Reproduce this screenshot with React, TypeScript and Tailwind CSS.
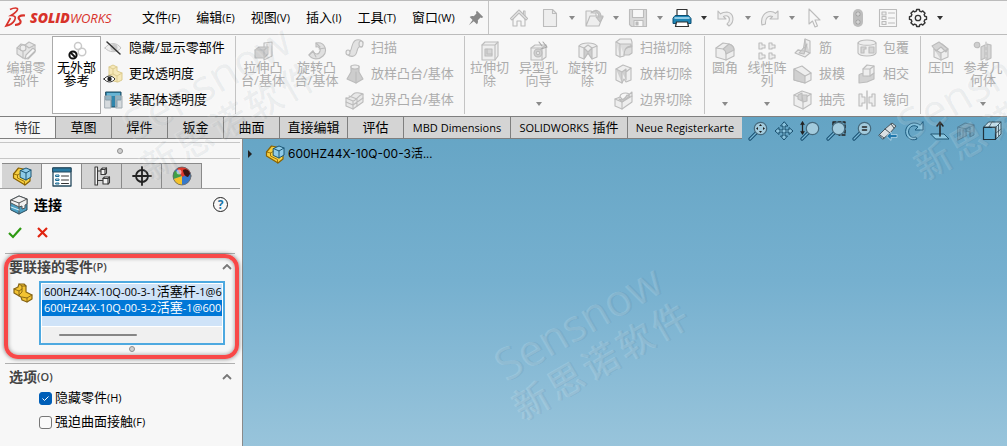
import type { ReactNode } from "react";

type IconProps = { size?: number; children: ReactNode };

function Icon({ size = 20, children }: IconProps) {
  return (
    <svg
      width={size}
      height={size}
      viewBox="0 0 20 20"
      fill="none"
      strokeLinejoin="round"
      strokeLinecap="round"
      className="shrink-0"
      aria-hidden="true"
    >
      {children}
    </svg>
  );
}

// Disabled commands share one grey outline style
function Grey({ children }: { children: ReactNode }) {
  return (
    <Icon>
      <g stroke="#bcbcbc" strokeWidth="1.1" fill="#eeeeee">
        {children}
      </g>
    </Icon>
  );
}

const toolIcons = {
  home: (
    <Grey>
      <path d="M1.500 10.500 10 2l8.500 8.500-1.500 1.500-7-7-7 7z" />
      <path d="M4 11v7h4v-5h4v5h4v-7M14.500 6V3h1.500v4.500" fill="none" />
    </Grey>
  ),
  blank: (
    <Grey>
      <path d="M3.500 1.500h9l4 4v13h-13z" />
      <path d="M12.500 1.500v4h4" fill="none" />
    </Grey>
  ),
  open: (
    <Grey>
      <path d="M2 18V3h5l2 2h3v3M2 18 6 8h13l-4 10z" />
      <path d="M7 5c5-3 8 0 8 4h-3l4 5 3-5h-2c0-6-5-9-10-4z" fill="#c9c9c9" />
    </Grey>
  ),
  save: (
    <Grey>
      <path d="M1.500 1.500h17v17h-15l-2-2z" fill="#d9d9d9" />
      <path d="M4.500 1.500h11v8h-11zM6 12.500h9v6H6z" fill="#f7f7f7" />
      <path d="M8 14h2v3H8z" fill="#b9b9b9" />
    </Grey>
  ),
  print: (
    <Icon>
      <path d="M5 8V1.500h10V8" fill="#fff" stroke="#333" strokeWidth="1.200" />
      <path d="M3.500 7.500h13l2.500 3v5H1v-5z" fill="#1f86b5" stroke="#0c4f74" />
      <path d="M3 10h14" stroke="#b9e2f4" strokeWidth="1.500" />
      <path d="M4.500 14h11l1 4.500h-13z" fill="#fff" stroke="#333" strokeWidth="1.200" />
    </Icon>
  ),
  undo: (
    <Grey>
      <path d="M2 3v8h8L7.500 8.500c4-2 7 1 5.500 5L11 16l2 2c6-4 5-13-2-14-3 0-5 .6-6.500 1.800z" />
    </Grey>
  ),
  redo: (
    <Grey>
      <path d="M18 3v8h-8l2.500-2.500C8.500 7 5 10 5.500 16l-3.500 1C0 9 5 3.500 10.500 3.500c2 0 3.800.6 5 1.800z" />
    </Grey>
  ),
  pointer: (
    <Grey>
      <path d="M5 1v15l3.500-3 2.500 6 2.500-1-2.500-6h5z" fill="#f7f7f7" />
    </Grey>
  ),
  light: (
    <Icon>
      <rect x="5" y="1" width="10" height="18" rx="5" fill="#bdbdbd" />
      <circle cx="10" cy="6" r="2.500" fill="#a3a3a3" />
      <circle cx="10" cy="14" r="2.500" fill="#a3a3a3" />
      <path d="M10 4.500v3M8.500 6h3M10 12.500v3M8.500 14h3" stroke="#e2e2e2" />
    </Icon>
  ),
  sheet: (
    <Grey>
      <path d="M1.500 1.500h17v17h-17z" fill="#f7f7f7" />
      <path d="M4 4h4v3H4zM4 8.500h4v3H4zM4 13.500h4v3H4zM10.500 5h6M10.500 10h6M10.500 15h6" />
    </Grey>
  ),
  gear: (
    <Icon>
      <path
        d="M8.300 3.200 8.600 1.500h2.800l.3 1.700 1.700.7 1.400-1 2.300 2.300-1 1.400.7 1.700 1.700.3v2.800l-1.700.3-.7 1.700 1 1.400-2.300 2.300-1.400-1-1.700.7-.3 1.700H8.600l-.3-1.700-1.700-.7-1.400 1-2.300-2.300 1-1.400-.7-1.700-1.700-.3V8.600l1.700-.3.7-1.700-1-1.400 2.300-2.300 1.400 1z"
        stroke="#333"
        strokeWidth="1.400"
      />
      <circle cx="10" cy="10" r="2.700" stroke="#333" strokeWidth="1.300" />
    </Icon>
  ),
  pin: (
    <Icon size={18}>
      <path d="M11 2l7 7-1.500 1-1.500-.500-3 3c.5 2 0 3.500-1 4.500L7.500 13.500 2 18l4.200-5.800L3 9c1-1 2.600-1.400 4.500-1l3-3-.500-1.500z" fill="#888" />
    </Icon>
  ),
};

const ribbonIcons = {
  editPart: (
    <Grey>
      <path d="M1 7l4-4 4 1 4-3 6 3v7l-7 7-5-1-6-4z" fill="#e6e6e6" />
      <path d="M1 7l6 3v7M9 4l4 3 6-3" fill="none" />
      <circle cx="7" cy="7" r="3" />
      <path d="M9 18l1-4 7-7 2.500 2.500-7 7z" fill="#f7f7f7" />
    </Grey>
  ),
  noExternal: (
    <Icon>
      <g stroke="#c9c9c9" strokeWidth="1.500">
        <circle cx="11" cy="5" r="3.500" />
        <circle cx="15" cy="11" r="3.800" />
      </g>
      <circle cx="6" cy="14" r="3.600" fill="#fff" stroke="#111" strokeWidth="2" />
      <path d="M4 12l4 4" stroke="#111" strokeWidth="1.800" />
    </Icon>
  ),
  hideShow: (
    <Icon>
      <path d="M2 10c4-6 12-6 16 0-4 5-12 5-16 0z" fill="#eee" stroke="#c4c4c4" />
      <circle cx="11" cy="9.500" r="3.500" fill="#c9c9c9" />
      <path d="M4 4l13 12" stroke="#333" strokeWidth="1.500" />
    </Icon>
  ),
  transparency: (
    <Icon>
      <path d="M6 9V3l4-2 4 2v4l5 2v7l-4 2-9-2z" fill="#f6e8b8" stroke="#dccb8f" />
      <path d="M6 3l4 2 4-2M10 5v5l4 2 5-3M14 12v6M10 10l-4 1" stroke="#dccb8f" />
      <path d="M1 15c3-4 8-4 11 0-3 4-8 4-11 0z" fill="#fff" stroke="#333" />
      <circle cx="6.500" cy="15" r="2.200" fill="#222" />
    </Icon>
  ),
  assembly: (
    <Icon>
      <path d="M3 2h15v8h-4v7H8v-7H3z" fill="#2f86ad" stroke="#1d4a61" />
      <path d="M4 3h13v3H4z" fill="#67b4d4" />
      <path d="M2 6h6v12H2zM13 6h6v12h-6z" fill="#c3cbd0" stroke="#a3adb3" fillOpacity=".65" />
    </Icon>
  ),
  extrude: (
    <Grey>
      <path d="M11 2l8-1v14l-8 4z" />
      <path d="M2 9l4-3h9v7l-4 4H2z" fill="#d0d0d0" />
      <path d="M2 9h9v8M11 9l4-3M14 3v4" fill="none" />
    </Grey>
  ),
  revolve: (
    <Grey>
      <path d="M9 2c9-2 12 8 7 13-4 4-11 4-14-1l4-4c2 4 6 4 7 0 1-3-2-5-4-4z" fill="#e0e0e0" />
      <path d="M2 14l4-4 3 6M9 2l4 4M12 8l6-1" fill="none" />
    </Grey>
  ),
  sweep: (
    <Grey>
      <path d="M2 13c3 2 4 0 5-5 1-5 4-7 8-6l3 2-1 5c-3-1-4 0-5 4-1 6-6 7-10 3z" fill="#e2e2e2" />
      <ellipse cx="16" cy="6" rx="2" ry="3" />
      <ellipse cx="3" cy="14.500" rx="2" ry="2.500" />
    </Grey>
  ),
  loft: (
    <Grey>
      <path d="M6 2h8v6l4 7-7 4-9-4 4-7z" fill="#cdcdcd" />
      <ellipse cx="10" cy="3" rx="4" ry="2" />
      <path d="M11 8v11" fill="none" />
    </Grey>
  ),
  boundary: (
    <Grey>
      <path d="M1 8c4 1 5-3 9-5 3-1 5 0 8 1v8L8 19l-7-3z" fill="#e8e8e8" />
      <path d="M1 8l7 3c4-1 5-6 10-7M8 11v8M4 6l8 3v7M1 12l7 3 10-7" fill="none" />
    </Grey>
  ),
  cutExtrude: (
    <Grey>
      <path d="M2 4l3-3h13v14l-3 4H2z" />
      <path d="M2 4h13v15M15 4l3-3" fill="none" />
      <path d="M5 8h7v7H5z" fill="#d6d6d6" />
      <path d="M7 8v5h5" fill="none" />
    </Grey>
  ),
  holeWizard: (
    <Grey>
      <path d="M2 7l4-3h11v12l-4 3H2z" />
      <path d="M2 7h11v12M13 7l4-3" fill="none" />
      <circle cx="9" cy="12" r="4" fill="#d0d0d0" />
      <circle cx="9" cy="12" r="1.600" />
      <path d="M10 1l3 4M14 1l4 5-6 2" fill="none" stroke="#a6a6a6" />
    </Grey>
  ),
  cutRevolve: (
    <Grey>
      <path d="M1 5c3-4 15-4 18 0v11l-5 2-4-6-4 6-5-2z" />
      <path d="M6 7l4 4 4-4v11l-4-6-4 6z" fill="#cdcdcd" />
      <path d="M1 5l5 2 4-3 4 3 5-2" fill="none" />
    </Grey>
  ),
  cutSweep: (
    <Grey>
      <path d="M2 4l4-3h11l1 3v4c-5 0-8 3-8 10l-4 1-4-2z" />
      <path d="M2 4l4 2v13M6 6h11v3c-5 0-7 3-7 8M11 12c1-3 4-4 7-4v7l-3 2h-4" fill="#dcdcdc" />
    </Grey>
  ),
  cutLoft: (
    <Grey>
      <path d="M2 5l7-4 8 3v12l-5 2-2-3-2 4-6-3z" />
      <path d="M2 5l6 3v11M8 8l4-3v11M12 8l5-4" fill="#d0d0d0" />
    </Grey>
  ),
  cutBoundary: (
    <Grey>
      <path d="M1 9l5-2 3 3 9-8v10L8 19l-7-3z" />
      <path d="M1 9l7 3 10-6M8 12v7M6 7c0-4 6-5 9-3" fill="none" />
      <path d="M5 9c3 2 6 0 8-4l3 1-8 6z" fill="#cfcfcf" />
    </Grey>
  ),
  fillet: (
    <Grey>
      <path d="M1 7l7-5 6 1c3 1 5 3 5 6v6l-8 4-10-3z" />
      <path d="M1 7l7 1c2 1 3 3 3 5l8-4c0-3-2-5-5-6L8 8" fill="#cfcfcf" />
      <path d="M11 13v6" fill="none" />
    </Grey>
  ),
  linear: (
    <Grey>
      <path d="M2 2h3v2h3v3H5v1H2zM12 2h3v2h3v3h-3v1h-3zM2 12h3v2h3v3H5v1H2zM12 12h3v2h3v3h-3v1h-3z" />
    </Grey>
  ),
  rib: (
    <Grey>
      <path d="M12 1l5 2v12l-5 4-10-4 3-3 5 1z" />
      <path d="M12 1v12l5 2M12 13l-7-1M14 6L6 15l5 1z" fill="#d5d5d5" />
    </Grey>
  ),
  draft: (
    <Grey>
      <path d="M1 5l8-3 9 7v7l-6 3-11-3z" />
      <path d="M1 5l11 7v7l-11-3z" fill="#d0d0d0" />
      <path d="M12 12l6-3" fill="none" />
    </Grey>
  ),
  shell: (
    <Grey>
      <path d="M1 5l8-4 9 3v10l-8 5-9-4z" />
      <path d="M1 5l9 4v10M10 9l8-5" fill="none" />
      <path d="M5 5l4-2v8l-4-2zM9 5l5 0v6l-4 1z" fill="#d0d0d0" />
    </Grey>
  ),
  wrap: (
    <Grey>
      <path d="M1 5c2-4 16-4 18 0v10c-2 4-16 4-18 0z" />
      <path d="M1 5c2 3 16 3 18 0" fill="none" />
      <path d="M4 9h5v2H7v4H4zM12 9h5v6h-5z" fill="#d6d6d6" />
    </Grey>
  ),
  intersect: (
    <Grey>
      <path d="M2 11c2-2 4-2 6 0 3 2 5 0 9-2v6l-7 3-8 1z" fill="#d2d2d2" />
      <path d="M6 5l4-4 7 1v7l-4 3H6z" />
      <path d="M6 5h7v7M13 5l4-3" fill="none" />
    </Grey>
  ),
  mirror: (
    <Grey>
      <path d="M2 4h3v3h3v6H5v3H2zM18 4h-3v3h-3v6h3v3h3z" />
      <path d="M10 1v18" strokeWidth="1.400" />
    </Grey>
  ),
  indent: (
    <Grey>
      <path d="M3 8l8-5 6 5v8l-7 3-7-3z" />
      <path d="M1 5l7-4 9 7-2 3-5-5-5 4zM3 8l7 4v7M10 12l7-4" fill="#d5d5d5" />
    </Grey>
  ),
  geometry: (
    <Grey>
      <circle cx="4" cy="4" r="2.800" fill="#cfcfcf" />
      <path d="M8 6l4-2v13l-4 2zM14 3l4 1v13l-4 2z" fill="#d6d6d6" />
      <path d="M13 1v18" strokeDasharray="3 2" fill="none" />
    </Grey>
  ),
};

function Part() {
  return (
    <Icon>
      <path d="M1.500 8l5-6 5 1v4l6.500 3v5l-5 4L1.500 12z" fill="#f7cf3f" stroke="#8a6200" strokeWidth="1.200" />
      <path d="M1.500 8l4 1 3.500-2M5.500 9v3l7 3.500V19" stroke="#8a6200" strokeWidth=".8" />
      <path d="M8.500 4.500L14 2l5 2v7l-5 3-5.500-2.500z" fill="#8fcbe8" stroke="#1b5675" />
      <path d="M8.500 4.500L14 7l5-3M14 7v7" stroke="#1b5675" />
    </Icon>
  );
}

const panelIcons = {
  properties: (
    <Icon>
      <path d="M1 1h18v18H1z" fill="#fff" stroke="#25495d" strokeWidth="1.300" />
      <path d="M1 1h18v4H1z" fill="#2a7ba3" stroke="#25495d" />
      <path d="M4 8h3v1.500H4zM4 12h3v1.500H4zM4 16h3v1H4z" stroke="#1b6d96" />
      <path d="M9.500 9h7M9.500 13h7M9.500 16.500h7" stroke="#333" />
    </Icon>
  ),
  config: (
    <Icon>
      <g stroke="#3a3a3a" strokeWidth="1.100">
        <path d="M3 1v18h2.500V1zM5.500 5H9M5.500 14.500H11" fill="#fff" />
        <path d="M9 3.500l1.500-1.500h4v5L13 8.500H9z" fill="#f2f2f2" />
        <path d="M9 3.500h4v5M13 3.500L14.500 2" />
        <path d="M11 12.500l1.500-1.500h5v5.500L16 18h-5z" fill="#f2f2f2" />
        <path d="M11 12.500h5V18M16 12.500l1.500-1.500" />
      </g>
    </Icon>
  ),
  dimension: (
    <Icon>
      <circle cx="10" cy="10" r="6" stroke="#222" strokeWidth="1.800" />
      <path d="M10 1v18M1 10h18" stroke="#222" strokeWidth="1.800" />
    </Icon>
  ),
  display: (
    <Icon>
      <circle cx="10" cy="10" r="9" fill="#3678c9" />
      <path d="M10 10L1.500 13A9 9 0 0 1 3 4.500z" fill="#3f9f46" />
      <path d="M10 11L5 2.500A9 9 0 0 1 18.500 7z" fill="#e0392b" />
      <path d="M10 10l-8.500 3a9 9 0 0 0 8.500 6z" fill="#f4c22b" />
      <path d="M11 4c3-2 7 1 7 4l-2 3c-3 0-5-4-5-7z" fill="#3c1512" />
      <circle cx="7" cy="6" r="2.500" fill="#fff" fillOpacity=".55" />
      <circle cx="10" cy="10" r="9" stroke="#666" strokeWidth=".8" />
    </Icon>
  ),
  join: (
    <Icon>
      <path d="M2 5l8-4 8 3v11l-8 4-8-4z" fill="#4d9fc2" stroke="#294b5c" />
      <path d="M2 5l8-4 8 3v5l-2 1v3l-3 1v-3l-3 1-8-4z" fill="#f2f2f2" stroke="#555" />
      <path d="M2 5l8 3 8-4M10 8v11" stroke="#555" />
      <path d="M2 12l8 3" stroke="#d6eef8" />
    </Icon>
  ),
  body: (
    <Icon>
      <path d="M1 6l4-2 1-3h5l2 2v6l6 3v4l-5 3-5-2-1-3-7-4z" fill="#f3c333" stroke="#856313" strokeWidth="1.200" />
      <path d="M1 6l5 2 3-2M6 8v5M6 1l3 2v6l-3 3M9 3h4M9 14l5 1 5-3M14 15v4" stroke="#856313" strokeWidth=".9" />
    </Icon>
  ),
};

function Lens({ children }: { children?: ReactNode }) {
  return (
    <>
      <path d="M2 18l6-6" stroke="#174e70" strokeWidth="3.200" />
      <path d="M2 18l6-6" stroke="#79b8d6" strokeWidth="1.200" />
      <circle cx="12.500" cy="7.500" r="6.200" fill="#a3cbdd" stroke="#45697c" strokeWidth="1.200" />
      {children}
    </>
  );
}

const viewTools = [
  {
    name: "Zoom to Fit",
    icon: (
      <Lens>
        <path d="M12.500 3l1.500 2h-3zM12.500 12l1.500-2h-3zM8 7.500l2-1.500v3zM17 7.500l-2-1.500v3z" fill="#222" />
      </Lens>
    ),
  },
  {
    name: "Pan",
    icon: (
      <path
        d="M10 1L6.500 5H9v4H5V6.500L1 10l4 3.500V11h4v4H6.500L10 19l3.500-4H11v-4h4v2.500l4-3.500-4-3.500V9h-4V5h2.500z"
        fill="#8bc4de"
        stroke="#174c6b"
      />
    ),
  },
  {
    name: "Dynamic Zoom",
    icon: (
      <>
        <Lens />
        <path d="M2.500 1v12M1 3.500L2.500 1 4 3.500M1 10.500L2.500 13 4 10.500" stroke="#222" strokeWidth="1.300" />
      </>
    ),
  },
  {
    name: "Zoom to Area",
    icon: (
      <>
        <path d="M7 1h12v13h-6M7 1v3" stroke="#222" strokeWidth="1.400" strokeDasharray="3 2" />
        <Lens />
      </>
    ),
  },
  {
    name: "Zoom to Selection",
    icon: (
      <Lens>
        <path d="M10.500 6h4M10.500 9h4" stroke="#222" strokeWidth="1.600" />
      </Lens>
    ),
  },
  {
    name: "Previous View",
    icon: (
      <>
        <path d="M1 14L7 8l7-6 4 3-6 7-7 6z" fill="#d9e0e3" stroke="#46545c" />
        <path d="M7 8l5 4M13 3l3 4M2 14l4 3" stroke="#46545c" />
        <path d="M9 15l4-4v2.500h6v3h-6V19z" fill="#2179ae" stroke="#d7edf7" strokeWidth=".6" />
      </>
    ),
  },
  {
    name: "Rotate",
    icon: <path d="M19 1v8h-8l3-3C8 2 3 8 5 13c1 3 4 4 7 3l1 2C6 21 0 15 2 8 4 2 11 0 16 4z" fill="#86c1dc" stroke="#1d5b7e" />,
  },
  {
    name: "Normal To",
    icon: (
      <>
        <path d="M1 13h13l5 5H6z" fill="#8cc8e1" stroke="#205773" />
        <path d="M10 15V2M7 5l3-4 3 4" stroke="#222" strokeWidth="1.500" />
      </>
    ),
  },
  {
    name: "Section View",
    icon: (
      <g fill="#6f9fb8" stroke="#547f96">
        <path d="M2 6l7-4 9 2v10l-4 2v-5l-4-1v5l-8 4z" />
        <path d="M2 6l8 2v7M10 8l8-4M4 8v8M7 9v7M14 6v9" />
      </g>
    ),
  },
  {
    name: "View Orientation",
    icon: (
      <>
        <path d="M7 1h12v12l-5 5V6H2z" fill="#c6e2ee" stroke="#2b4552" />
        <path d="M1.500 6.500h12v12h-12z" fill="#5fabd0" stroke="#20333d" strokeWidth="1.200" />
        <path d="M14 6l5-5M14 12l5-4M10 1l-3 5M16.500 4v11" stroke="#2b4552" strokeWidth=".8" />
      </>
    ),
  },
];

const menus = [
  ["文件", "(F)"],
  ["编辑", "(E)"],
  ["视图", "(V)"],
  ["插入", "(I)"],
  ["工具", "(T)"],
  ["窗口", "(W)"],
];

const quickTools = [
  { name: "New", icon: toolIcons.blank },
  { name: "Open", icon: toolIcons.open },
  { name: "Save", icon: toolIcons.save },
  { name: "Print", icon: toolIcons.print, active: true },
  { name: "Undo", icon: toolIcons.undo },
  { name: "Redo", icon: toolIcons.redo },
  { name: "Select", icon: toolIcons.pointer },
];

const tabs = [
  { label: "特征", width: "w-[55px]" },
  { label: "草图", width: "w-14" },
  { label: "焊件", width: "w-14" },
  { label: "钣金", width: "w-14" },
  { label: "曲面", width: "w-14" },
  { label: "直接编辑", width: "w-[68px]" },
  { label: "评估", width: "w-14" },
  { latin: "MBD Dimensions", width: "w-[107px]" },
  { latin: "SOLIDWORKS", label: " 插件", width: "w-[117px]" },
  { latin: "Neue Registerkarte", width: "w-[115px]" },
];

const panelTabs = [
  { name: "FeatureManager", icon: <Part /> },
  { name: "PropertyManager", icon: panelIcons.properties },
  { name: "ConfigurationManager", icon: panelIcons.config },
  { name: "DimXpertManager", icon: panelIcons.dimension },
  { name: "DisplayManager", icon: panelIcons.display },
];

const parts = [
  { code: "600HZ44X-10Q-00-3-1", name: "活塞杆", rest: "-1@600HZ44X" },
  { code: "600HZ44X-10Q-00-3-2", name: "活塞", rest: "-1@600HZ44X", selected: true },
];

function Caret({ active = false }: { active?: boolean }) {
  return (
    <svg width="6" height="4" viewBox="0 0 6 4" className={active ? "text-[#333]" : "text-[#8a8a8a]"} aria-hidden="true">
      <path d="M0 0h6L3 4z" fill="currentColor" />
    </svg>
  );
}

type BigButtonProps = { icon: ReactNode; lines: string[]; width: string; menu?: boolean; active?: boolean };

function BigButton({ icon, lines, width, menu, active }: BigButtonProps) {
  return (
    <button
      className={`flex h-[78px] shrink-0 flex-col items-center leading-[13px] ${width} ${
        active ? "border border-[#ababab] bg-white pt-1 text-black" : "pt-[5px] text-[#acacac]"
      }`}
    >
      {icon}
      {lines.map((line) => (
        <span key={line} className="whitespace-nowrap">
          {line}
        </span>
      ))}
      {menu && (
        <span className="mt-auto pb-2">
          <Caret />
        </span>
      )}
    </button>
  );
}

type ColumnProps = { items: { icon: ReactNode; label: string }[]; width: string; active?: boolean };

function Column({ items, width, active }: ColumnProps) {
  return (
    <div className={`-mt-px shrink-0 ${width} ${active ? "text-black" : "text-[#acacac]"}`}>
      {items.map((item) => (
        <button key={item.label} className="flex h-[26px] items-center gap-1.5 whitespace-nowrap">
          {item.icon}
          {item.label}
        </button>
      ))}
    </div>
  );
}

function Divider() {
  return <div className="h-[78px] w-px shrink-0 bg-[#c4c4c4]" />;
}

function Ribbon() {
  return (
    <div className="flex h-20 pt-px">
      <BigButton icon={ribbonIcons.editPart} lines={["编辑零", "部件"]} width="w-[52px]" />
      <BigButton icon={ribbonIcons.noExternal} lines={["无外部", "参考"]} width="w-[49px]" active />
      <Column
        width="w-[134px] pl-0.5"
        active
        items={[
          { icon: ribbonIcons.hideShow, label: "隐藏/显示零部件" },
          { icon: ribbonIcons.transparency, label: "更改透明度" },
          { icon: ribbonIcons.assembly, label: "装配体透明度" },
        ]}
      />
      <Divider />
      <BigButton icon={ribbonIcons.extrude} lines={["拉伸凸", "台/基体"]} width="w-[54px]" />
      <BigButton icon={ribbonIcons.revolve} lines={["旋转凸", "台/基体"]} width="w-[53px]" />
      <Column
        width="w-[121px] pl-0.5"
        items={[
          { icon: ribbonIcons.sweep, label: "扫描" },
          { icon: ribbonIcons.loft, label: "放样凸台/基体" },
          { icon: ribbonIcons.boundary, label: "边界凸台/基体" },
        ]}
      />
      <Divider />
      <BigButton icon={ribbonIcons.cutExtrude} lines={["拉伸切", "除"]} width="w-[49px]" />
      <BigButton icon={ribbonIcons.holeWizard} lines={["异型孔", "向导"]} width="w-[49px]" menu />
      <BigButton icon={ribbonIcons.cutRevolve} lines={["旋转切", "除"]} width="w-[49px]" />
      <Column
        width="w-[92px] pl-0.5"
        items={[
          { icon: ribbonIcons.cutSweep, label: "扫描切除" },
          { icon: ribbonIcons.cutLoft, label: "放样切除" },
          { icon: ribbonIcons.cutBoundary, label: "边界切除" },
        ]}
      />
      <Divider />
      <BigButton icon={ribbonIcons.fillet} lines={["圆角"]} width="w-10" menu />
      <BigButton icon={ribbonIcons.linear} lines={["线性阵", "列"]} width="w-11" menu />
      <Column
        width="w-16 pl-1"
        items={[
          { icon: ribbonIcons.rib, label: "筋" },
          { icon: ribbonIcons.draft, label: "拔模" },
          { icon: ribbonIcons.shell, label: "抽壳" },
        ]}
      />
      <Column
        width="w-[67px] pl-1"
        items={[
          { icon: ribbonIcons.wrap, label: "包覆" },
          { icon: ribbonIcons.intersect, label: "相交" },
          { icon: ribbonIcons.mirror, label: "镜向" },
        ]}
      />
      <Divider />
      <BigButton icon={ribbonIcons.indent} lines={["压凹"]} width="w-10" />
      <BigButton icon={ribbonIcons.geometry} lines={["参考几", "何体"]} width="w-11" menu />
    </div>
  );
}

function MenuBar() {
  return (
    <header className="flex h-[35px] items-center border-y border-[#bcbcbc]">
      <div className="flex w-[135px] shrink-0 items-center gap-1 pl-1 text-[#d8322a]">
        <svg width="22" height="22" viewBox="0 0 22 22" fill="none" stroke="currentColor" aria-hidden="true">
          <path d="M6 2.500c4-2 8-2 7.500 0C13 4 11 6 7 8.500c4 0 5.500 1.500 3.500 5-1.500 2.500-4 4.500-8.500 5.500L6.500 11" strokeWidth="1.700" />
          <path d="M21 8.500c-5-.500-8 1.500-5.500 4 2 2 2 5-4.500 5.500" strokeWidth="2.200" />
        </svg>
        <span className="font-['Open_Sans'] text-sm italic leading-none">
          <span className="font-extrabold">SOLID</span>
          <span className="text-[13px]">WORKS</span>
        </span>
      </div>
      <nav className="flex w-[326px] shrink-0 gap-4 pl-[7px]">
        {menus.map(([label, key]) => (
          <button key={label} className="whitespace-nowrap text-black">
            {label}
            <span className="text-[11px]">{key}</span>
          </button>
        ))}
      </nav>
      <button className="w-[27px] shrink-0 pl-1.5" aria-label="Pin menu">
        {toolIcons.pin}
      </button>
      <div className="h-full w-px shrink-0 bg-[#c4c4c4]" />
      <div className="flex shrink-0 items-center pl-5">
        <button className="mr-2 w-[22px]" aria-label="Home">
          {toolIcons.home}
        </button>
        {quickTools.map((tool) => (
          <div key={tool.name} className="flex">
            <button className="flex w-[22px] justify-center" aria-label={tool.name}>
              {tool.icon}
            </button>
            <button className="flex w-[22px] items-center justify-center" aria-label={`${tool.name} options`}>
              <Caret active={tool.active} />
            </button>
          </div>
        ))}
        <button className="flex w-[22px] justify-center" aria-label="Rebuild">
          {toolIcons.light}
        </button>
        <button className="mx-2 flex w-[22px] justify-center" aria-label="File properties">
          {toolIcons.sheet}
        </button>
        <button className="flex w-[22px] justify-center" aria-label="Options">
          {toolIcons.gear}
        </button>
        <button className="flex w-[22px] items-center justify-center" aria-label="More options">
          <Caret active />
        </button>
      </div>
    </header>
  );
}

function TabRow() {
  return (
    <div className="flex h-[23px] border-t border-[#7f7f7f]">
      <div className="flex shrink-0 border-b border-[#7f7f7f]">
        {tabs.map((tab, i) => (
          <button
            key={tab.width + i}
            className={`whitespace-pre ${tab.width} ${
              i === 0 ? "bg-[#f7f7f7] text-[#333]" : "border-l border-[#7f7f7f] bg-[#d4d4d4] text-black"
            }`}
          >
            <span className="text-[11px]">{tab.latin}</span>
            {tab.label}
          </button>
        ))}
      </div>
      <div className="flex h-7 shrink-0 items-center pl-[3px]">
        {viewTools.map((tool) => (
          <button key={tool.name} className="flex w-[26px] justify-center" aria-label={tool.name}>
            <Icon>{tool.icon}</Icon>
          </button>
        ))}
      </div>
    </div>
  );
}

function SectionTitle({ title, hotkey }: { title: string; hotkey: string }) {
  return (
    <h2 className="border-t border-[#b0b0b0] text-sm font-bold text-[#444]">
      <button className="flex h-[27px] w-full items-center pb-0.5 pl-1 pr-[3px]">
        {title}
        <span className="text-[11px] font-semibold">{hotkey}</span>
        <svg width="10" height="6" viewBox="0 0 10 6" className="ml-auto" aria-hidden="true">
          <path d="M1 5l4-4 4 4" fill="none" stroke="#777" strokeWidth="1.800" />
        </svg>
      </button>
    </h2>
  );
}

function Grip() {
  return <span className="block size-1.5 rounded-full border border-[#8f8f8f] bg-[#d0d0d0]" />;
}

function Option({ label, hotkey, checked }: { label: string; hotkey: string; checked?: boolean }) {
  return (
    <label className="flex h-6 items-center gap-[3px] text-black">
      <span className="relative flex">
        <input
          type="checkbox"
          defaultChecked={checked}
          className="peer size-[13px] appearance-none rounded-[3px] border border-[#777] bg-[#fafafa] checked:border-[#005fb8] checked:bg-[#005fb8]"
        />
        <svg width="13" height="13" viewBox="0 0 13 13" className="absolute hidden peer-checked:block" aria-hidden="true">
          <path d="M3.500 6.500l2 2 4-4" fill="none" stroke="#fff" />
        </svg>
      </span>
      <span>
        {label}
        <span className="text-[11px]">{hotkey}</span>
      </span>
    </label>
  );
}

function PropertyPanel() {
  return (
    <aside className="w-[243px] shrink-0 border-r border-[#8a8a8a] bg-[#f7f7f7]">
      <div className="mr-0.5 mt-[3px] flex h-[17px] items-center justify-center border-y border-[#c6c6c6]">
        <Grip />
      </div>
      <div className="mr-0.5 flex h-[30px] items-end border-b border-[#a0a0a0] pl-0.5">
        {panelTabs.map((tab, i) => (
          <button
            key={tab.name}
            aria-label={tab.name}
            className={`flex w-10 items-center justify-center border-r border-t border-[#8a8a8a] ${
              i === 1 ? "-mb-px h-[26px] bg-[#f7f7f7]" : "h-[25px] bg-[#d4d4d4]"
            }`}
          >
            {tab.icon}
          </button>
        ))}
      </div>
      <div className="flex h-[33px] items-center gap-1 pb-0.5 pl-[9px] pr-3.5">
        {panelIcons.join}
        <h1 className="pl-px text-sm font-bold text-black">连接</h1>
        <button
          className="ml-auto flex size-[15px] items-center justify-center rounded-full border border-[#222] text-xs font-bold leading-none text-[#1773a5]"
          aria-label="Help"
        >
          ?
        </button>
      </div>
      <div className="flex h-[31px] items-start gap-3 pl-[7px] pt-0.5">
        <button aria-label="OK">
          <svg width="16" height="16" viewBox="0 0 16 16" aria-hidden="true">
            <path d="M2 9l4 4 8-9" fill="none" stroke="#2e9a12" strokeWidth="2.200" />
          </svg>
        </button>
        <button aria-label="Cancel">
          <svg width="16" height="16" viewBox="0 0 16 16" aria-hidden="true">
            <path d="M3 4l9 9M12 4l-9 9" fill="none" stroke="#e02410" strokeWidth="2.200" />
          </svg>
        </button>
      </div>

      <section className="relative ml-[5px] mr-[7px] h-[110px]">
        <SectionTitle title="要联接的零件" hotkey="(P)" />
        <div className="flex items-start gap-1.5 pl-2 pr-2.5">
          <div className="pt-0.5">{panelIcons.body}</div>
          <div className="h-16 min-w-0 flex-1 overflow-hidden border-2 border-[#4ea9e0] bg-white p-px leading-[14px]">
            <ul role="listbox" aria-label="要联接的零件" className="h-[42px] bg-[#cfe3f8]">
              {parts.map((part) => (
                <li
                  key={part.code}
                  role="option"
                  aria-selected={!!part.selected}
                  className={`h-4 overflow-hidden whitespace-nowrap pl-0.5 ${part.selected ? "bg-[#0078d7] text-white" : "text-black"}`}
                >
                  <span className="text-[11px]">{part.code}</span>
                  {part.name}
                  <span className="text-[11px]">{part.rest}</span>
                </li>
              ))}
            </ul>
            <div className="mt-px flex h-4 items-center bg-[#f0f0f0] pl-[17px]">
              <div className="h-0.5 w-[78px] rounded-full bg-[#868686]" />
            </div>
          </div>
        </div>
        <div className="flex justify-center pl-6 pt-px">
          <Grip />
        </div>
        {/* Callout frame round the selection box */}
        <div className="pointer-events-none absolute -inset-x-px -right-1 bottom-1 top-px rounded-[14px] border-4 border-[#f84848] shadow-[0_0_4px_rgba(0,0,0,0.5),inset_0_0_4px_rgba(0,0,0,0.4)]" />
      </section>

      <section className="ml-[5px] mr-[7px]">
        <SectionTitle title="选项" hotkey="(O)" />
        <div className="-mt-[5px] pl-[34px]">
          <Option label="隐藏零件" hotkey="(H)" checked />
          <Option label="强迫曲面接触" hotkey="(F)" />
        </div>
      </section>
    </aside>
  );
}

function Watermark({ position }: { position: string }) {
  return (
    <div
      className={`pointer-events-none absolute flex h-24 w-52 -rotate-[30deg] select-none flex-col items-center text-transparent [text-shadow:-1px_0_0_rgba(255,255,255,0.14),1px_1px_0_rgba(50,75,90,0.08)] ${position}`}
      aria-hidden="true"
    >
      <span className="text-[44px] font-medium leading-[48px]">Sensnow</span>
      <span className="flex gap-1 text-4xl font-medium leading-[44px]">
        {["新", "思", "诺", "软", "件"].map((char) => (
          <span key={char}>{char}</span>
        ))}
      </span>
    </div>
  );
}

export default function App() {
  return (
    <div className="relative flex min-h-screen flex-col overflow-hidden bg-[#f7f7f7] font-['Open_Sans','Noto_Sans_CJK_SC',sans-serif] text-[13px]">
      <MenuBar />
      <Ribbon />
      <div className="mt-px flex flex-1 flex-col bg-linear-to-b from-[#64a4c4] via-[#76b0cf] to-[#98c4db]">
        <TabRow />
        <div className="flex flex-1">
          <PropertyPanel />
          <main className="flex items-start pl-1 pt-[5px]">
            <button className="flex items-center text-black">
              <svg width="6" height="8" viewBox="0 0 6 8" className="mr-3" aria-hidden="true">
                <path d="M1 0l4 4-4 4z" fill="#222" />
              </svg>
              <Part />
              <span className="pl-[3px] font-['Inter','Noto_Sans_CJK_SC',sans-serif] text-xs">
                600HZ44X-10Q-00-3活
                <span className="text-[11px]">...</span>
              </span>
            </button>
          </main>
        </div>
      </div>
      <Watermark position="left-[113px] top-[54px]" />
      <Watermark position="left-[486px] top-[294px]" />
      <Watermark position="left-[888px] top-[54px]" />
    </div>
  );
}
